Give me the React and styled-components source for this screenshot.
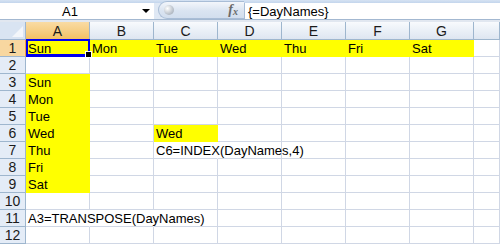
import React from "react";
import styled, { createGlobalStyle } from "styled-components";

const GlobalStyle = createGlobalStyle`
  body {
    margin: 0;
    font-family: "Liberation Sans", Arial, sans-serif;
    background: #ffffff;
  }
`;

const COLS = ["A", "B", "C", "D", "E", "F", "G", "H"];
const DAYS = ["Sun", "Mon", "Tue", "Wed", "Thu", "Fri", "Sat"];

// each row: map of column -> { text, fill, spill }
const rows = [
  Object.fromEntries(DAYS.map((d, i) => [COLS[i], { text: d, fill: true }])),
  {},
  { A: { text: "Sun", fill: true } },
  { A: { text: "Mon", fill: true } },
  { A: { text: "Tue", fill: true } },
  { A: { text: "Wed", fill: true }, C: { text: "Wed", fill: true } },
  { A: { text: "Thu", fill: true }, C: { text: "C6=INDEX(DayNames,4)", spill: true } },
  { A: { text: "Fri", fill: true } },
  { A: { text: "Sat", fill: true } },
  {},
  { A: { text: "A3=TRANSPOSE(DayNames)", spill: true }, B: { spill: true } },
  {},
];

const App = () => {
  return (
    <Window>
      <GlobalStyle />
      <TopStrip />
      <FormulaBar>
        <NameBox>
          <NameText>A1</NameText>
          <DropArrow />
        </NameBox>
        <FxPill>
          <Knob />
          <Fx>
            f<sub>x</sub>
          </Fx>
        </FxPill>
        <FormulaInput>{"{=DayNames}"}</FormulaInput>
      </FormulaBar>
      <BarGap />
      <Sheet>
        <Corner>
          <CornerTriangle />
        </Corner>
        {COLS.map((c) => (
          <ColHeader key={c} $active={c === "A"}>
            {c === "H" ? "" : c}
          </ColHeader>
        ))}
        {rows.map((row, r) => (
          <React.Fragment key={r}>
            <RowHeader $active={r === 0}>{r + 1}</RowHeader>
            {COLS.map((c) => {
              const cell = row[c] || {};
              const selected = r === 0 && c === "A";
              return (
                <Cell key={c} $fill={cell.fill} $spill={cell.spill}>
                  {cell.text && <CellText>{cell.text}</CellText>}
                  {selected && (
                    <Selection>
                      <FillHandle />
                    </Selection>
                  )}
                </Cell>
              );
            })}
          </React.Fragment>
        ))}
      </Sheet>
    </Window>
  );
};

const Window = styled.div`
  width: 500px;
  height: 244px;
  overflow: hidden;
  display: flex;
  flex-direction: column;
  background: #ffffff;
`;

const TopStrip = styled.div`
  height: 5px;
  background: linear-gradient(#d6e3f3, #c3d5ec);
`;

const FormulaBar = styled.div`
  height: 22px;
  display: flex;
  align-items: stretch;
  background: #dfe8f4;
  border-bottom: 1px solid #a3b8d1;
`;

const NameBox = styled.div`
  width: 154px;
  display: flex;
  align-items: center;
  background: #ffffff;
`;

const NameText = styled.span`
  width: 140px;
  text-align: center;
  font-size: 13px;
  color: #000;
`;

const DropArrow = styled.span`
  width: 0;
  height: 0;
  margin-left: 2px;
  border-left: 4px solid transparent;
  border-right: 4px solid transparent;
  border-top: 4px solid #000;
`;

const FxPill = styled.div`
  width: 86px;
  margin-left: 4px;
  margin-top: -2px;
  display: flex;
  align-items: center;
  justify-content: space-between;
  padding: 0 6px 0 5px;
  box-sizing: border-box;
  border-radius: 12px 0 0 12px;
  border: 1px solid #a9bdd6;
  border-right: none;
  background: linear-gradient(#f3f6fb, #dae4f1 55%, #d2deee);
`;

const Knob = styled.span`
  width: 10px;
  height: 10px;
  border-radius: 50%;
  background: radial-gradient(circle at 35% 35%, #ffffff, #bcc3cc 60%, #9aa2ad);
`;

const Fx = styled.span`
  font-family: "Liberation Serif", "Times New Roman", serif;
  font-style: italic;
  font-weight: bold;
  font-size: 14px;
  color: #6a6a6a;
  sub {
    font-size: 10px;
    vertical-align: -1px;
  }
`;

const FormulaInput = styled.div`
  flex: 1;
  display: flex;
  align-items: center;
  padding-left: 3px;
  background: #ffffff;
  border-left: 1px solid #a9bdd6;
  font-size: 13px;
  color: #000;
`;

const BarGap = styled.div`
  height: 3px;
  background: #e1e7f0;
`;

const Sheet = styled.div`
  display: grid;
  grid-template-columns: 26px repeat(7, 64px) 1fr;
  grid-template-rows: 18px;
  grid-auto-rows: 17px;
`;

const Corner = styled.div`
  position: relative;
  box-sizing: border-box;
  background: #d9e4f2;
  border-right: 1px solid #9eb6ce;
  border-bottom: 1px solid #9eb6ce;
`;

const CornerTriangle = styled.span`
  position: absolute;
  right: 2px;
  bottom: 2px;
  width: 0;
  height: 0;
  border-left: 11px solid transparent;
  border-bottom: 11px solid #f3f6fa;
`;

const ColHeader = styled.div`
  box-sizing: border-box;
  display: flex;
  align-items: center;
  justify-content: center;
  font-size: 14px;
  color: #1b1b1b;
  border-right: 1px solid #9eb6ce;
  border-bottom: 1px solid ${(p) => (p.$active ? "#f2a13a" : "#9eb6ce")};
  background: ${(p) =>
    p.$active
      ? "linear-gradient(#f9dba4, #f6cf86 50%, #f2c064)"
      : "linear-gradient(#f8fafd, #eaf0f7 50%, #dee6f1)"};
`;

const RowHeader = styled.div`
  box-sizing: border-box;
  display: flex;
  align-items: center;
  justify-content: center;
  font-size: 14px;
  color: #1b1b1b;
  border-bottom: 1px solid #9eb6ce;
  border-right: 1px solid ${(p) => (p.$active ? "#f2a13a" : "#9eb6ce")};
  background: ${(p) => (p.$active ? "#f8d7a0" : "#e4ecf7")};
`;

const Cell = styled.div`
  position: relative;
  box-sizing: border-box;
  min-width: 0;
  border-bottom: 1px solid #d0d7e5;
  border-right: 1px solid ${(p) => (p.$fill ? "#ffff00" : p.$spill ? "transparent" : "#d0d7e5")};
  background: ${(p) => (p.$fill ? "#ffff00" : "transparent")};
  ${(p) => p.$fill && "border-bottom-color: #ffff00;"}
`;

const CellText = styled.span`
  position: relative;
  z-index: 1;
  display: block;
  padding: 1px 0 0 2px;
  font-size: 13px;
  line-height: 16px;
  color: #000;
  white-space: nowrap;
`;

const Selection = styled.div`
  position: absolute;
  z-index: 2;
  left: 0;
  top: -1px;
  right: -1px;
  bottom: -1px;
  border: 2px solid #0000ee;
  border-bottom-width: 3px;
`;

const FillHandle = styled.span`
  position: absolute;
  right: -4px;
  bottom: -4px;
  width: 5px;
  height: 5px;
  background: #000;
  border: 1px solid #ffffff;
`;

export default App;
